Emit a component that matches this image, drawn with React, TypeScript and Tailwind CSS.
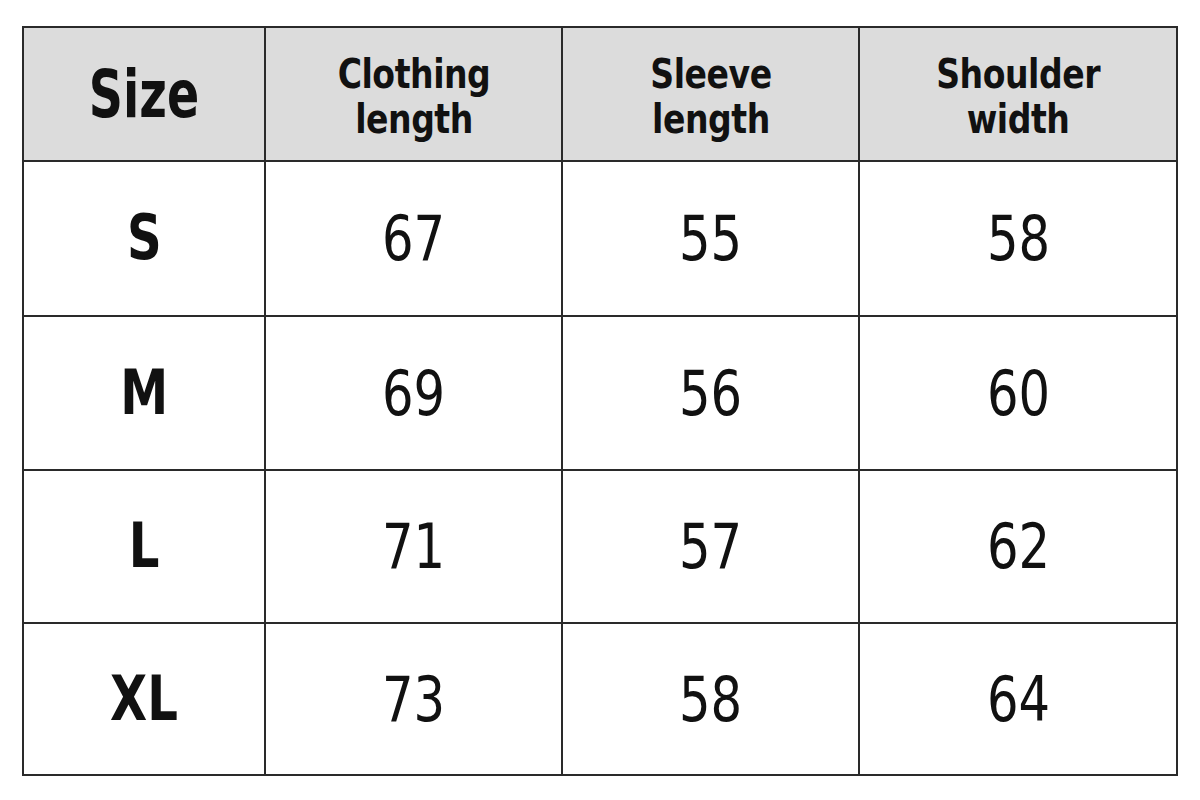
import React from "react";

const rows = [
  ["S", "67", "55", "58"],
  ["M", "69", "56", "60"],
  ["L", "71", "57", "62"],
  ["XL", "73", "58", "64"],
];

const font = { fontFamily: '"DejaVu Sans Condensed", "DejaVu Sans", sans-serif' };

export default function App() {
  return (
    <div className="w-[1200px] h-[800px] bg-white pt-[26px] pl-[22px]" style={font}>
      <div className="w-[1156px] border-2 border-[#2a2a2a] grid grid-cols-[242px_297px_297px_1fr] grid-rows-[134px_155px_154px_153px_150px] text-[#111]">
        <div className="bg-[#dcdcdc] border-r-2 border-b-2 border-[#2a2a2a] flex items-center justify-center">
          <span className="inline-block text-[66px] font-bold leading-none scale-x-[0.8] pt-[2px]">Size</span>
        </div>
        {["Clothing|length", "Sleeve|length", "Shoulder|width"].map((h, i) => (
          <div
            key={h}
            className={`bg-[#dcdcdc] border-b-2 border-[#2a2a2a] flex items-center justify-center pt-[6px] ${i < 2 ? "border-r-2" : ""}`}
          >
            <span className="inline-block text-[40px] font-bold leading-[45px] text-center tracking-[-0.5px] scale-x-[0.92]">
              {h.split("|")[0]}
              <br />
              {h.split("|")[1]}
            </span>
          </div>
        ))}
        {rows.map((r, ri) =>
          r.map((c, ci) => (
            <div
              key={ri + "-" + ci}
              className={`flex items-center justify-center border-[#2a2a2a] ${ci < 3 ? "border-r-2" : ""} ${ri < 3 ? "border-b-2" : ""}`}
            >
              {ci === 0 ? (
                <span className="inline-block text-[63px] font-bold scale-x-[0.85]">{c}</span>
              ) : (
                <span className="inline-block text-[62px] scale-x-[0.89]">{c}</span>
              )}
            </div>
          ))
        )}
      </div>
    </div>
  );
}
